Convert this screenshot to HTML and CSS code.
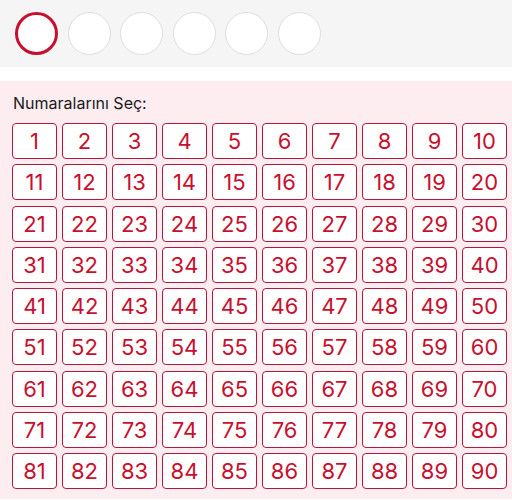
FILE: index.html
```html
<!DOCTYPE html>
<html lang="tr">
<head>
  <meta charset="UTF-8">
  <meta name="viewport" content="width=device-width, initial-scale=1.0">
  <title>Numaralarını Seç</title>
  <link rel="stylesheet" href="styles.css">
</head>
<body>

<div class="picked-bar">
  <div class="ball active"></div>
  <div class="ball"></div>
  <div class="ball"></div>
  <div class="ball"></div>
  <div class="ball"></div>
  <div class="ball"></div>
</div>

<div class="picker">
  <h2 class="picker-title">Numaralarını Seç:</h2>
  <div class="number-grid">
    <button class="num">1</button><button class="num">2</button><button class="num">3</button><button class="num">4</button><button class="num">5</button><button class="num">6</button><button class="num">7</button><button class="num">8</button><button class="num">9</button><button class="num">10</button>
    <button class="num">11</button><button class="num">12</button><button class="num">13</button><button class="num">14</button><button class="num">15</button><button class="num">16</button><button class="num">17</button><button class="num">18</button><button class="num">19</button><button class="num">20</button>
    <button class="num">21</button><button class="num">22</button><button class="num">23</button><button class="num">24</button><button class="num">25</button><button class="num">26</button><button class="num">27</button><button class="num">28</button><button class="num">29</button><button class="num">30</button>
    <button class="num">31</button><button class="num">32</button><button class="num">33</button><button class="num">34</button><button class="num">35</button><button class="num">36</button><button class="num">37</button><button class="num">38</button><button class="num">39</button><button class="num">40</button>
    <button class="num">41</button><button class="num">42</button><button class="num">43</button><button class="num">44</button><button class="num">45</button><button class="num">46</button><button class="num">47</button><button class="num">48</button><button class="num">49</button><button class="num">50</button>
    <button class="num">51</button><button class="num">52</button><button class="num">53</button><button class="num">54</button><button class="num">55</button><button class="num">56</button><button class="num">57</button><button class="num">58</button><button class="num">59</button><button class="num">60</button>
    <button class="num">61</button><button class="num">62</button><button class="num">63</button><button class="num">64</button><button class="num">65</button><button class="num">66</button><button class="num">67</button><button class="num">68</button><button class="num">69</button><button class="num">70</button>
    <button class="num">71</button><button class="num">72</button><button class="num">73</button><button class="num">74</button><button class="num">75</button><button class="num">76</button><button class="num">77</button><button class="num">78</button><button class="num">79</button><button class="num">80</button>
    <button class="num">81</button><button class="num">82</button><button class="num">83</button><button class="num">84</button><button class="num">85</button><button class="num">86</button><button class="num">87</button><button class="num">88</button><button class="num">89</button><button class="num">90</button>
  </div>
</div>

</body>
</html>
```

FILE: styles.css
```css
/* Global Styles */
body {
  font-family: 'Inter', 'Noto Sans', sans-serif;
  margin: 0;
  background-color: #ffffff;
}

/* Selected balls */
.picked-bar {
  height: 67px;
  background-color: #f5f5f5;
  display: flex;
  align-items: center;
  gap: 9.5px;
  padding-left: 15px;
  margin-bottom: 14px;
}

.ball {
  width: 43px;
  height: 43px;
  box-sizing: border-box;
  border-radius: 50%;
  background-color: #ffffff;
  border: 1px solid #dedede;
}

.ball.active {
  border: 3px solid #c8102e;
}

/* Number picker */
.picker {
  background-color: #fdedf0;
  padding: 11px 0 10px 12px;
}

.picker-title {
  margin: 0 0 9px 1px;
  font-size: 16px;
  font-weight: 400;
  color: #1a1a1a;
  line-height: 22px;
}

.number-grid {
  display: grid;
  grid-template-columns: repeat(10, 45px);
  grid-auto-rows: 36px;
  column-gap: 5px;
  row-gap: 5.25px;
}

.num {
  margin: 0;
  padding: 0;
  background-color: #ffffff;
  border: 1px solid #b3173c;
  border-radius: 4px;
  color: #c8102e;
  font-family: inherit;
  font-size: 22px;
  font-weight: 400;
  cursor: pointer;
}

.num:hover {
  background-color: #fff5f6;
}
```
